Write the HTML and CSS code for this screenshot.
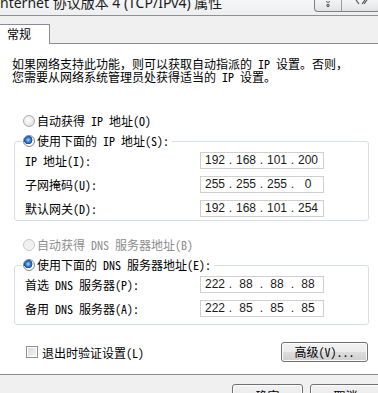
FILE: index.html
```html
<!DOCTYPE html>
<html lang="zh-CN">
<head>
  <meta charset="UTF-8" />
  <title>Internet 协议版本 4 (TCP/IPv4) 属性</title>
  <link rel="stylesheet" href="styles.css">
</head>
<body>
  <div class="titlebar">
    <span class="title">nternet 协议版本 4 (TCP/IPv4) 属性</span>
    <div class="caption-btns">
      <span class="cap-help">
        <svg width="26" height="11" viewBox="0 0 26 11"><path d="M11 1.5 Q13 3.5 15 1.5 M12 4.5 h2 v2 h-2 z" fill="none" stroke="#555" stroke-width="1"/></svg>
      </span>
      <span class="cap-close">
        <svg width="37" height="11" viewBox="0 0 37 11"><path d="M14 0 L17 4 M23 0 L20 4 M25 0 L22 4" fill="none" stroke="#555" stroke-width="1.2"/></svg>
      </span>
    </div>
  </div>
  <div class="tabs">
    <div class="tab">常规</div>
  </div>
  <div class="page">
    <p class="intro">如果网络支持此功能，则可以获取自动指派的 IP 设置。否则，<br>您需要从网络系统管理员处获得适当的 IP 设置。</p>

    <label class="radio-row"><span class="radio"></span>自动获得 IP 地址(O)</label>
    <fieldset class="group">
      <legend><span class="radio checked"></span>使用下面的 IP 地址(S):</legend>
      <div class="field-row">
        <span class="field-label">IP 地址(I):</span>
        <div class="ip"><span>192</span><span class="dot">.</span><span>168</span><span class="dot">.</span><span>101</span><span class="dot">.</span><span>200</span></div>
      </div>
      <div class="field-row">
        <span class="field-label">子网掩码(U):</span>
        <div class="ip"><span>255</span><span class="dot">.</span><span>255</span><span class="dot">.</span><span>255</span><span class="dot">.</span><span>0</span></div>
      </div>
      <div class="field-row">
        <span class="field-label">默认网关(D):</span>
        <div class="ip"><span>192</span><span class="dot">.</span><span>168</span><span class="dot">.</span><span>101</span><span class="dot">.</span><span>254</span></div>
      </div>
    </fieldset>

    <label class="radio-row disabled"><span class="radio"></span>自动获得 DNS 服务器地址(B)</label>
    <fieldset class="group dns">
      <legend><span class="radio checked"></span>使用下面的 DNS 服务器地址(E):</legend>
      <div class="field-row">
        <span class="field-label">首选 DNS 服务器(P):</span>
        <div class="ip"><span>222</span><span class="dot">.</span><span>88</span><span class="dot">.</span><span>88</span><span class="dot">.</span><span>88</span></div>
      </div>
      <div class="field-row">
        <span class="field-label">备用 DNS 服务器(A):</span>
        <div class="ip"><span>222</span><span class="dot">.</span><span>85</span><span class="dot">.</span><span>85</span><span class="dot">.</span><span>85</span></div>
      </div>
    </fieldset>

    <div class="options-row">
      <label class="check-row"><span class="checkbox"></span>退出时验证设置(L)</label>
      <button class="btn btn-advanced">高级(V)...</button>
    </div>
  </div>
  <div class="footer">
    <button class="btn btn-footer">确定</button>
    <button class="btn btn-footer">取消</button>
  </div>
</body>
</html>
```

FILE: styles.css
```css
body {
  margin: 0;
  width: 378px;
  height: 393px;
  overflow: hidden;
  background: #f0f0f0;
  font-family: "Noto Sans Mono CJK SC", "Noto Sans CJK SC", monospace;
  font-size: 12px;
  color: #000;
}
.titlebar {
  height: 15px;
  border-bottom: 1px solid #8e9094;
  background: linear-gradient(#f6f7f8, #eceef0);
  display: flex;
  justify-content: space-between;
  overflow: hidden;
}
.title {
  font-family: "Noto Sans", "Noto Sans CJK SC", sans-serif;
  font-size: 14px;
  line-height: 14px;
  margin-top: -4px;
  color: #1b1b1b;
  white-space: nowrap;
}
.caption-btns {
  display: flex;
  height: 11px;
  margin-right: -2px;
  border: 1px solid #7d7f83;
  border-top: none;
  border-radius: 0 0 4px 4px;
  background: linear-gradient(#f4f4f4, #e2e4e6);
}
.caption-btns span {
  display: block;
  height: 11px;
}
.caption-btns svg {
  display: block;
}
.cap-help {
  width: 26px;
  border-right: 1px solid #9a9ca0;
}
.cap-close {
  width: 37px;
}
.tabs {
  height: 27px;
  display: flex;
  align-items: flex-end;
  border-bottom: 1px solid #898c95;
}
.tab {
  box-sizing: border-box;
  width: 50px;
  height: 20px;
  margin-bottom: -1px;
  padding-left: 7px;
  background: #fff;
  border-top: 1px solid #898c95;
  border-right: 1px solid #898c95;
  font-family: "Noto Sans CJK SC", sans-serif;
  font-size: 12px;
  line-height: 18px;
}
.page {
  box-sizing: border-box;
  height: 331px;
  padding: 13px 9px 0 12px;
  background: #fff;
  border-bottom: 1px solid #898c95;
}
.intro {
  margin: 0 0 30px;
  line-height: 13px;
  white-space: nowrap;
}
.radio-row,
.group legend {
  display: flex;
  align-items: center;
  gap: 2px;
  height: 16px;
  line-height: 16px;
  white-space: nowrap;
}
.radio-row {
  padding-left: 11px;
}
.radio-row.disabled {
  margin-top: 16px;
  color: #8d8d8d;
}
.radio {
  box-sizing: border-box;
  width: 12px;
  height: 12px;
  border-radius: 50%;
  border: 1px solid #a9abae;
  background: radial-gradient(circle at 40% 40%, #ffffff, #e3e4e6 70%, #d6d8db);
}
.radio-row.disabled .radio {
  border-color: #c7c8ca;
  background: #f1f1f1;
}
.radio.checked {
  border-color: #7d8791;
  background:
    radial-gradient(circle at 42% 40%, #b9dcf8 0, #3f8ce0 2px, #14479c 4px, transparent 4.5px),
    radial-gradient(circle, #fff 60%, #e4e6e8);
}
.group {
  margin: 4px 0 0 2px;
  padding: 0 10px 3px;
  border: 1px solid #d5dfe5;
  border-radius: 3px;
}
.group.dns {
  padding-bottom: 7px;
}
.group legend {
  margin-left: -3px;
  padding: 0 3px 0 1px;
}
.field-row {
  display: flex;
  align-items: center;
  height: 17px;
  margin-top: 7px;
}
.field-row:first-of-type {
  margin-top: 3px;
}
.field-label {
  width: 175px;
  white-space: nowrap;
}
.ip {
  box-sizing: border-box;
  display: flex;
  width: 124px;
  height: 17px;
  padding-left: 2px;
  border: 1px solid #cfcfcf;
  font-family: "Liberation Sans", sans-serif;
  font-size: 12px;
  line-height: 15px;
  color: #1a1a1a;
}
.ip span {
  width: 24px;
  text-align: center;
}
.ip .dot {
  width: 7px;
}
.options-row {
  display: flex;
  justify-content: space-between;
  align-items: center;
  height: 20px;
  margin-top: 17px;
  padding: 0 1px 0 14px;
}
.check-row {
  display: flex;
  align-items: center;
  gap: 4px;
}
.checkbox {
  box-sizing: border-box;
  width: 12px;
  height: 12px;
  border: 1px solid #8f8f8f;
  background: linear-gradient(135deg, #d8d9db, #f6f6f6);
  box-shadow: inset 0 0 0 1px #fff;
}
.btn {
  box-sizing: border-box;
  border: 1px solid #707070;
  border-radius: 3px;
  background: linear-gradient(#f2f2f2, #ebebeb 48%, #dddddd 52%, #cfcfcf);
  box-shadow: inset 0 0 0 1px #fcfcfc;
  font-family: "Noto Sans Mono CJK SC", "Noto Sans CJK SC", monospace;
  font-size: 12px;
  color: #000;
  padding: 0;
}
.btn-advanced {
  width: 87px;
  height: 20px;
  line-height: 18px;
}
.footer {
  display: flex;
  gap: 7px;
  padding: 9px 0 0 232px;
}
.btn-footer {
  flex: none;
  width: 71px;
  height: 23px;
  line-height: 21px;
}
```
